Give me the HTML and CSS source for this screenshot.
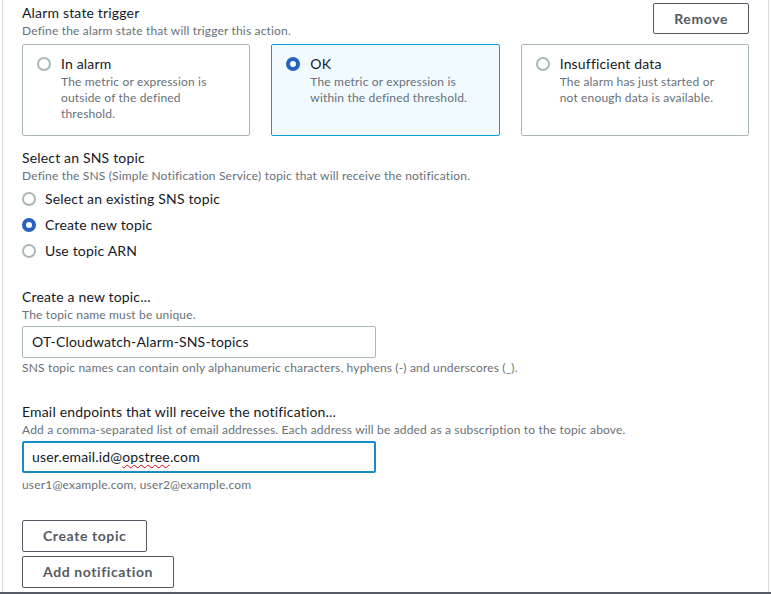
FILE: index.html
```html
<!DOCTYPE html>
<html lang="en">
<head>
<meta charset="utf-8">
<title>Alarm notification</title>
<link rel="stylesheet" href="styles.css">
</head>
<body>
<div class="page">
  <div class="panel">
    <div class="header">
      <div class="field-head">
        <div class="title">Alarm state trigger</div>
        <div class="desc">Define the alarm state that will trigger this action.</div>
      </div>
      <button class="btn">Remove</button>
    </div>

    <div class="cards">
      <div class="card">
        <span class="radio"></span>
        <div class="card-text">
          <div class="label">In alarm</div>
          <div class="card-desc">The metric or expression is<br>outside of the defined<br>threshold.</div>
        </div>
      </div>
      <div class="card card-selected">
        <span class="radio radio-on"></span>
        <div class="card-text">
          <div class="label">OK</div>
          <div class="card-desc">The metric or expression is<br>within the defined threshold.</div>
        </div>
      </div>
      <div class="card">
        <span class="radio"></span>
        <div class="card-text">
          <div class="label">Insufficient data</div>
          <div class="card-desc">The alarm has just started or<br>not enough data is available.</div>
        </div>
      </div>
    </div>

    <div class="section sns">
      <div class="title">Select an SNS topic</div>
      <div class="desc">Define the SNS (Simple Notification Service) topic that will receive the notification.</div>
      <div class="options">
        <div class="option"><span class="radio"></span><span class="label">Select an existing SNS topic</span></div>
        <div class="option"><span class="radio radio-on"></span><span class="label">Create new topic</span></div>
        <div class="option"><span class="radio"></span><span class="label">Use topic ARN</span></div>
      </div>
    </div>

    <div class="section newtopic">
      <div class="title">Create a new topic...</div>
      <div class="desc">The topic name must be unique.</div>
      <div class="input">OT-Cloudwatch-Alarm-SNS-topics</div>
      <div class="hint hint-a">SNS topic names can contain only alphanumeric characters, hyphens (-) and underscores (_).</div>
    </div>

    <div class="section email">
      <div class="title">Email endpoints that will receive the notification...</div>
      <div class="desc">Add a comma-separated list of email addresses. Each address will be added as a subscription to the topic above.</div>
      <div class="input input-focus">user.email.id@<span class="spell">opstree</span>.com</div>
      <div class="hint hint-b">user1@example.com, user2@example.com</div>
    </div>

    <div class="actions">
      <button class="btn">Create topic</button>
      <button class="btn">Add notification</button>
    </div>
  </div>
</div>
</body>
</html>
```

FILE: styles.css
```css
* { box-sizing: border-box; }

html, body {
  margin: 0;
  padding: 0;
  background: #ffffff;
}

body {
  font-family: Lato, "Open Sans", "Liberation Sans", sans-serif;
  color: #16191f;
  width: 771px;
  height: 594px;
  overflow: hidden;
  letter-spacing: 0.17px;
}

.page {
  height: 594px;
  border-bottom: 2px solid #545b64;
}

.panel {
  margin-left: 2px;
  width: 767px;
  height: 100%;
  border-left: 1px solid #d5dbdb;
  border-right: 1px solid #d5dbdb;
  padding: 3px 19px 0 19px;
}

.header {
  display: flex;
  justify-content: space-between;
  align-items: flex-start;
}

.title {
  font-size: 14px;
  line-height: 20px;
  color: #16191f;
}

.desc, .hint {
  font-size: 12px;
  line-height: 16px;
  color: #687078;
}

.btn {
  font-family: inherit;
  font-size: 14px;
  font-weight: 700;
  letter-spacing: 0.6px;
  color: #545b64;
  background: #ffffff;
  border: 1px solid #545b64;
  border-radius: 2px;
  height: 32px;
  padding: 0 20px;
  line-height: 20px;
  cursor: pointer;
}

.header .btn {
  height: 31px;
  padding: 0 20px;
}

.cards {
  display: grid;
  grid-template-columns: 1fr 1fr 1fr;
  gap: 21px;
  margin-top: 5px;
}

.card {
  display: flex;
  gap: 10px;
  border: 1px solid #aab7b8;
  border-radius: 2px;
  padding: 9px 14px 13px 14px;
  background: #ffffff;
}

.card-selected {
  background: #f1faff;
  border-color: #0a9fd6;
}

.radio {
  flex: none;
  width: 14px;
  height: 14px;
  border-radius: 50%;
  border: 2px solid #aab7b8;
  background: #ffffff;
  margin-top: 3px;
  display: inline-block;
}

.radio-on {
  border: 4px solid #2762c3;
}

.label {
  font-size: 14px;
  line-height: 20px;
  color: #16191f;
}

.card-desc {
  font-size: 12px;
  line-height: 16px;
  color: #687078;
  white-space: nowrap;
}

.sns {
  margin-top: 12px;
}

.options {
  margin-top: 5px;
  display: flex;
  flex-direction: column;
  gap: 6px;
}

.option {
  display: flex;
  align-items: flex-start;
  gap: 9px;
  height: 20px;
}

.newtopic {
  margin-top: 26px;
}

.input {
  margin-top: 3px;
  width: 354px;
  height: 32px;
  border: 1px solid #aab7b8;
  border-radius: 2px;
  padding: 0 9px;
  font-size: 14px;
  line-height: 30px;
  color: #16191f;
  white-space: nowrap;
}

.input-focus {
  margin-top: 3px;
  border: 2px solid #1b8bc6;
  padding: 0 8px;
  line-height: 28px;
  height: 32px;
}

.spell {
  text-decoration: underline wavy #d0021b;
  text-decoration-thickness: 1px;
  text-underline-offset: 2px;
}

.hint-a { margin-top: 2px; }
.hint-b { margin-top: 4px; }

.email {
  margin-top: 26px;
}

.actions {
  margin-top: 27px;
  display: flex;
  flex-direction: column;
  align-items: flex-start;
  gap: 4px;
}
```
